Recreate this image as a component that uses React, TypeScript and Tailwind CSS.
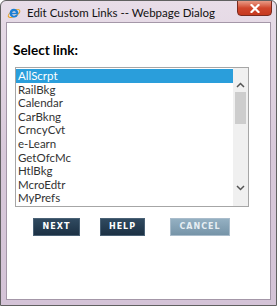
const links = [
  "AllScrpt",
  "RailBkg",
  "Calendar",
  "CarBkng",
  "CrncyCvt",
  "e-Learn",
  "GetOfcMc",
  "HtlBkg",
  "McroEdtr",
  "MyPrefs",
];

/**
 * Little IE logo in the title bar
 */
const IeIcon = () => (
  <svg width="14" height="14" viewBox="0 0 16 16">
    <ellipse cx="8" cy="8.5" rx="7.3" ry="3.2" fill="none" stroke="#e9a21f" strokeWidth="1.2" transform="rotate(-30 8 8.5)" />
    <path d="M8 3.2a5 5 0 1 0 4.7 6.8h-2.3a2.7 2.7 0 0 1-4.7-.6h7.2A5 5 0 0 0 8 3.2zm-2.2 4.4a2.3 2.3 0 0 1 4.4 0z" fill="#1b7fd4" />
  </svg>
);

const DialogButton = ({ label, width, disabled }: { label: string; width: string; disabled?: boolean }) => (
  <button
    className={
      disabled
        ? "h-[18px] flex items-center justify-center bg-gradient-to-b from-[#94b0c2] to-[#7694a8] text-[#e6eef3] text-[8px] font-bold tracking-[1px] border border-[#a9bccb] " + width
        : "h-[18px] flex items-center justify-center bg-gradient-to-b from-[#304a60] to-[#1c3144] text-white text-[8px] font-bold tracking-[1px] border border-[#4a6175] " + width
    }
    style={{ fontFamily: '"DejaVu Sans", sans-serif' }}
  >
    {label}
  </button>
);

export default function App() {
  return (
    <div
      className="w-[277px] h-[306px] flex flex-col bg-gradient-to-b from-[#e8dde8] via-[#d8c9da] to-[#d4c3d7] border border-[#606060] rounded-t-[6px] overflow-hidden"
      style={{ fontFamily: 'Lato, "Noto Sans", sans-serif' }}
    >
      {/* Title bar */}
      <div className="h-[21px] flex items-start justify-between">
        <div className="flex items-center gap-[6px] pl-[6px] pt-[5px]">
          <IeIcon />
          <span className="text-[11.5px] leading-[14px] text-[#111]">Edit Custom Links -- Webpage Dialog</span>
        </div>
        <div className="mr-[4px] mt-[-1px] w-[35px] h-[16px] rounded-b-[4px] border border-[#7a2a1e] bg-gradient-to-b from-[#e89a86] via-[#d0462c] to-[#c6391f] flex items-center justify-center">
          <svg width="10" height="9" viewBox="0 0 10 9">
            <path d="M1.5 1l7 7M8.5 1l-7 7" stroke="#fff" strokeWidth="2.2" strokeLinecap="square" />
          </svg>
        </div>
      </div>

      {/* Client area */}
      <div className="flex-1 mx-[5px] mb-[5px] bg-white border border-[#a497a8] flex flex-col">
        <h2 className="mt-[19px] ml-[6px] text-[13.5px] font-bold leading-[16px] text-black">Select link:</h2>

        <div className="mt-[9px] ml-[8px] w-[234px] h-[140px] border border-[#a6a6a6] flex">
          <ul className="flex-1 flex flex-col pt-[1px]">
            {links.map((name, i) => (
              <li
                key={name}
                className={
                  i === 0
                    ? "h-[13.6px] leading-[13.6px] pl-[2px] text-[11.5px] bg-[#2a9edb] text-white"
                    : "h-[13.6px] leading-[13.6px] pl-[2px] text-[11.5px] text-[#333]"
                }
              >
                {name}
              </li>
            ))}
          </ul>
          {/* Scrollbar */}
          <div className="w-[15px] bg-[#f0f0f0] flex flex-col items-center">
            <svg className="mt-[14px]" width="9" height="6" viewBox="0 0 9 6">
              <path d="M1 5l3.5-3.5L8 5" fill="none" stroke="#555" strokeWidth="1.5" />
            </svg>
            <div className="mt-[4px] w-[11px] h-[32px] bg-[#cdcdcd]" />
            <div className="flex-1" />
            <svg className="mb-[15px]" width="9" height="6" viewBox="0 0 9 6">
              <path d="M1 1l3.5 3.5L8 1" fill="none" stroke="#555" strokeWidth="1.5" />
            </svg>
          </div>
        </div>

        <div className="mt-[11px] flex items-center pl-[26px]">
          <DialogButton label="NEXT" width="w-[47px]" />
          <div className="w-[20px]" />
          <DialogButton label="HELP" width="w-[45px]" />
          <div className="w-[25px]" />
          <DialogButton label="CANCEL" width="w-[60px]" disabled />
        </div>
      </div>
    </div>
  );
}
